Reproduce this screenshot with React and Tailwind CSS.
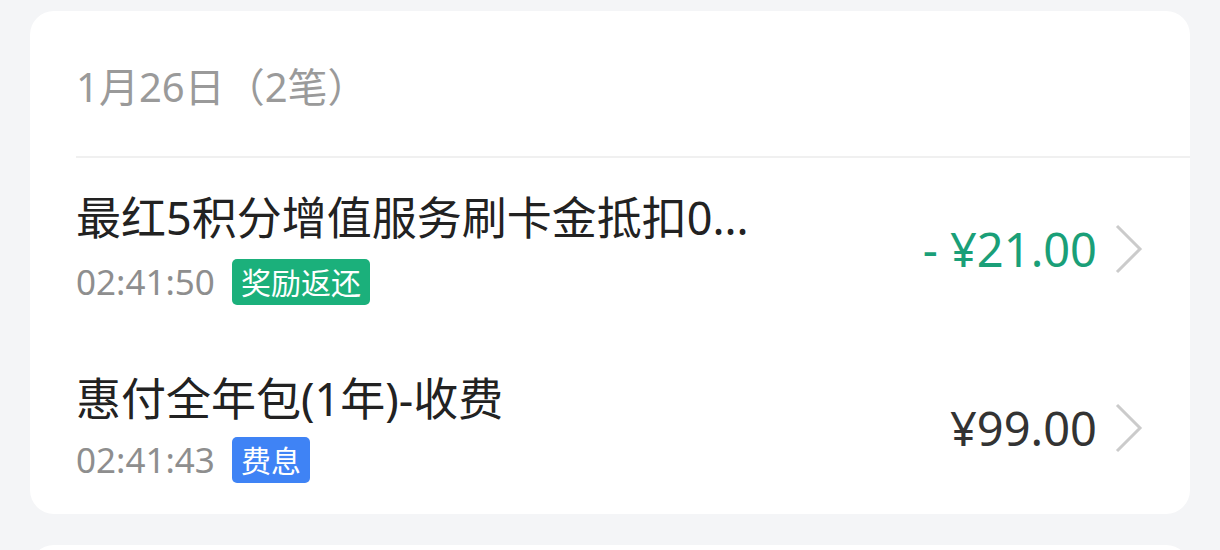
import React from 'react';

const rows = [
  {
    title: '最红5积分增值服务刷卡金抵扣0...',
    time: '02:41:50',
    tag: '奖励返还',
    tagClass: 'bg-[#1bb07b]',
    amount: '- ¥21.00',
    amountClass: 'text-[#1a9f78]',
    pb: 'pb-[34px]',
    gap: 'mt-[15px]',
  },
  {
    title: '惠付全年包(1年)-收费',
    time: '02:41:43',
    tag: '费息',
    tagClass: 'bg-[#3f83f5]',
    amount: '¥99.00',
    amountClass: 'text-[#333333]',
    pb: 'pb-[31px]',
    gap: 'mt-[12px]',
  },
];

function Chevron() {
  return (
    <svg width="30" height="52" viewBox="0 0 30 52" className="ml-[17px] shrink-0">
      <polyline points="3,3 26,26 3,49" fill="none" stroke="#cbcbcb" strokeWidth="3" />
    </svg>
  );
}

function Row({ r }) {
  return (
    <div className={`flex items-center pt-[34px] pr-[46px] ${r.pb}`}>
      <div className="flex flex-col min-w-0">
        <div className="text-[45px] leading-[52px] text-[#222222] whitespace-nowrap">{r.title}</div>
        <div className={`flex items-center gap-[17px] ${r.gap}`}>
          <span className="text-[35px] leading-[46px] text-[#8e8e8e]">{r.time}</span>
          <span className={`h-[46px] flex items-center px-[9px] rounded-[5px] text-[30px] text-white ${r.tagClass}`}>
            {r.tag}
          </span>
        </div>
      </div>
      <div className={`ml-auto text-[47px] leading-[56px] ${r.amountClass}`}>{r.amount}</div>
      <Chevron />
    </div>
  );
}

export default function App() {
  return (
    <div
      className="min-h-screen bg-[#f4f5f7] pt-[11px] px-[30px] overflow-hidden"
      style={{ fontFamily: '"Noto Sans", "Noto Sans CJK SC", sans-serif' }}
    >
      <div className="bg-white rounded-[24px] pl-[46px]">
        <div className="pt-[52px] pb-[45px] border-b-2 border-[#f0f0f0]">
          <div className="text-[40px] leading-[48px] text-[#9a9a9a]">1月26日（2笔）</div>
        </div>
        {rows.map((r) => (
          <Row key={r.time} r={r} />
        ))}
      </div>
      <div className="bg-white rounded-[24px] h-[120px] mt-[31px]" />
    </div>
  );
}
